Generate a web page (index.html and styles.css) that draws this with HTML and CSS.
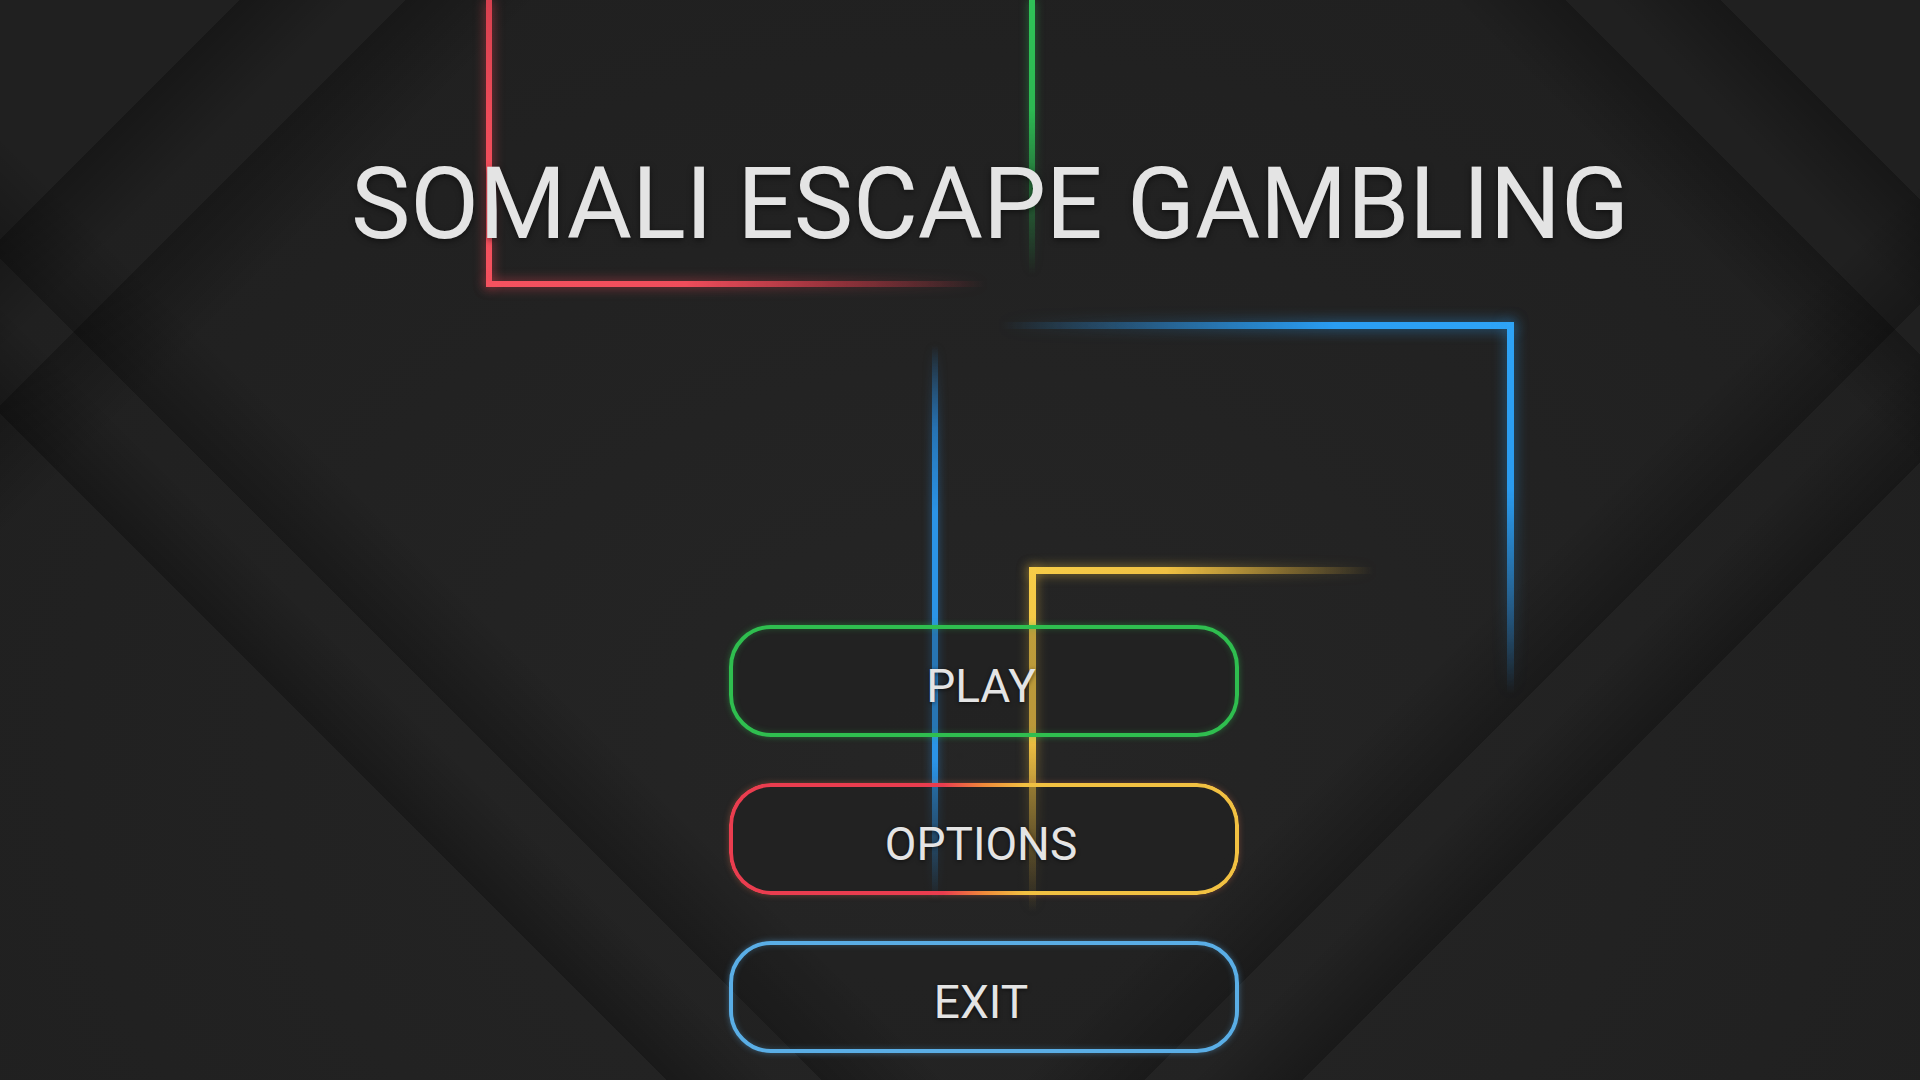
FILE: index.html
```html
<!DOCTYPE html>
<html lang="en">
<head>
<meta charset="utf-8">
<title>Somali Escape Gambling</title>
<link rel="stylesheet" href="styles.css">
</head>
<body>
<div class="screen">
  <div class="neon" aria-hidden="true">
    <div class="line red-v"></div>
    <div class="line red-h"></div>
    <div class="line green-v"></div>
    <div class="line blue-h"></div>
    <div class="line blue-v"></div>
    <div class="line blue-v2"></div>
    <div class="line yellow-h"></div>
    <div class="line yellow-v"></div>
  </div>
  <main class="menu">
    <h1 class="title">SOMALI ESCAPE GAMBLING</h1>
    <nav class="buttons">
      <button class="btn btn-play">PLAY</button>
      <button class="btn btn-options">OPTIONS</button>
      <button class="btn btn-exit">EXIT</button>
    </nav>
  </main>
</div>
</body>
</html>
```

FILE: styles.css
```css
html, body {
  margin: 0;
  padding: 0;
}

body {
  width: 1920px;
  height: 1080px;
  overflow: hidden;
  background: #212121;
  font-family: Roboto, "Noto Sans", "Liberation Sans", sans-serif;
}

.screen {
  position: relative;
  width: 1920px;
  height: 1080px;
  overflow: hidden;
  background-color: #222222;
  background-image:
    /* upper-left band ("/") */
    linear-gradient(135deg, transparent 169.7px, rgba(0,0,0,0.28) 169.7px, rgba(0,0,0,0) 250px),
    linear-gradient(135deg, transparent 286.4px, rgba(0,0,0,0.26) 286.4px, rgba(0,0,0,0) 380px),
    /* lower-left band ("\") */
    linear-gradient(45deg, transparent 471.6px, rgba(0,0,0,0.28) 471.6px, rgba(0,0,0,0) 550px),
    linear-gradient(45deg, transparent 581.2px, rgba(0,0,0,0.26) 581.2px, rgba(0,0,0,0) 670px),
    /* upper-right band ("\") */
    linear-gradient(45deg, rgba(0,0,0,0) 1790px, rgba(0,0,0,0.26) 1871px, transparent 1871px),
    linear-gradient(45deg, rgba(0,0,0,0) 1900px, rgba(0,0,0,0.28) 1980px, transparent 1980px),
    /* lower-right band ("/") */
    linear-gradient(135deg, rgba(0,0,0,0) 1485px, rgba(0,0,0,0.26) 1573px, transparent 1573px),
    linear-gradient(135deg, rgba(0,0,0,0) 1605px, rgba(0,0,0,0.28) 1685px, transparent 1685px),
    radial-gradient(ellipse at 50% 70%, rgba(255,255,255,0.015), rgba(0,0,0,0.06) 80%);
}

/* ---------- neon lines ---------- */
.neon {
  position: absolute;
  inset: 0;
  pointer-events: none;
}

.line {
  position: absolute;
}

.red-v {
  left: 486px;
  top: 0;
  width: 6px;
  height: 287px;
  background: linear-gradient(to bottom, #d8404f 0%, #ee4b59 40%, #f5525f 100%);
  filter: drop-shadow(0 0 6px rgba(245, 70, 85, 0.6));
}

.red-h {
  left: 486px;
  top: 281px;
  width: 500px;
  height: 6px;
  background: linear-gradient(to right, #f5525f 0%, #ef4d5b 40%, rgba(220, 60, 75, 0.55) 70%, rgba(220, 60, 75, 0) 100%);
  filter: drop-shadow(0 0 6px rgba(245, 70, 85, 0.6));
}

.green-v {
  left: 1029px;
  top: 0;
  width: 6px;
  height: 275px;
  background: linear-gradient(to bottom, #2fc257 0%, #2db852 40%, rgba(40, 170, 75, 0.35) 75%, rgba(40, 170, 75, 0) 100%);
  filter: drop-shadow(0 0 5px rgba(45, 190, 85, 0.5));
}

.blue-h {
  left: 1000px;
  top: 322px;
  width: 514px;
  height: 7px;
  background: linear-gradient(to right, rgba(42, 150, 235, 0) 0%, rgba(42, 150, 235, 0.45) 30%, #2a9df2 65%, #2ea4f7 100%);
  filter: drop-shadow(0 0 7px rgba(42, 160, 245, 0.6));
}

.blue-v {
  left: 1507px;
  top: 322px;
  width: 7px;
  height: 372px;
  background: linear-gradient(to bottom, #2ea4f7 0%, #2a9bef 45%, rgba(40, 145, 230, 0.4) 80%, rgba(40, 145, 230, 0) 100%);
  filter: drop-shadow(0 0 7px rgba(42, 160, 245, 0.55));
}

.blue-v2 {
  left: 932px;
  top: 345px;
  width: 6px;
  height: 555px;
  background: linear-gradient(to bottom, rgba(40, 140, 225, 0) 0%, rgba(40, 140, 225, 0.7) 15%, #2b93e6 30%, #2b93e6 75%, rgba(40, 140, 225, 0) 100%);
  filter: drop-shadow(0 0 5px rgba(42, 150, 240, 0.5));
}

.yellow-h {
  left: 1029px;
  top: 567px;
  width: 345px;
  height: 7px;
  background: linear-gradient(to right, #f7cd48 0%, #efc043 40%, rgba(230, 180, 60, 0.4) 75%, rgba(230, 180, 60, 0) 100%);
  filter: drop-shadow(0 0 6px rgba(245, 200, 70, 0.55));
}

.yellow-v {
  left: 1029px;
  top: 567px;
  width: 7px;
  height: 345px;
  background: linear-gradient(to bottom, #f7cd48 0%, #efc043 50%, rgba(220, 175, 60, 0.35) 82%, rgba(220, 175, 60, 0) 100%);
  filter: drop-shadow(0 0 6px rgba(245, 200, 70, 0.5));
}

/* ---------- menu ---------- */
.menu {
  position: relative;
  z-index: 1;
  display: flex;
  flex-direction: column;
  align-items: center;
  box-sizing: border-box;
  width: 1920px;
  height: 1080px;
  padding: 145px 0 0 48px;
}

.title {
  margin: 0 0 0 12px;
  font-size: 100px;
  font-weight: 400;
  line-height: 117px;
  letter-spacing: -0.2px;
  color: #e4e4e4;
  white-space: nowrap;
  text-shadow: 0 2px 6px rgba(0, 0, 0, 0.5);
}

.buttons {
  display: flex;
  flex-direction: column;
  gap: 46px;
  margin-top: 363px;
}

.btn {
  position: relative;
  box-sizing: border-box;
  width: 510px;
  height: 112px;
  padding: 10px 6px 0 0;
  border: 4px solid transparent;
  border-radius: 42px;
  background: rgba(28, 28, 28, 0.25);
  color: #e4e4e4;
  font-family: Roboto, "Noto Sans", "Liberation Sans", sans-serif;
  font-size: 46px;
  font-weight: 400;
  line-height: 1;
  cursor: pointer;
  text-shadow: 0 1px 4px rgba(0, 0, 0, 0.6);
}

.btn-play {
  border-color: #2fbe4f;
  box-shadow: 0 0 6px rgba(47, 190, 79, 0.45), inset 0 0 6px rgba(47, 190, 79, 0.3);
}

.btn-exit {
  border-color: #5aaee6;
  box-shadow: 0 0 6px rgba(90, 174, 230, 0.45), inset 0 0 6px rgba(90, 174, 230, 0.3);
}

.btn-options {
  box-shadow: 0 0 6px rgba(240, 120, 80, 0.35);
}

.btn-options::before {
  content: "";
  position: absolute;
  inset: -4px;
  padding: 4px;
  border-radius: 42px;
  background: linear-gradient(to right, #ea3d4f 0%, #ea3d4f 42%, #f08a3a 50%, #f2c142 58%, #f2c142 100%);
  -webkit-mask: linear-gradient(#000 0 0) content-box, linear-gradient(#000 0 0);
  -webkit-mask-composite: xor;
  mask: linear-gradient(#000 0 0) content-box exclude, linear-gradient(#000 0 0);
  filter: drop-shadow(0 0 3px rgba(240, 130, 70, 0.5));
}
```
